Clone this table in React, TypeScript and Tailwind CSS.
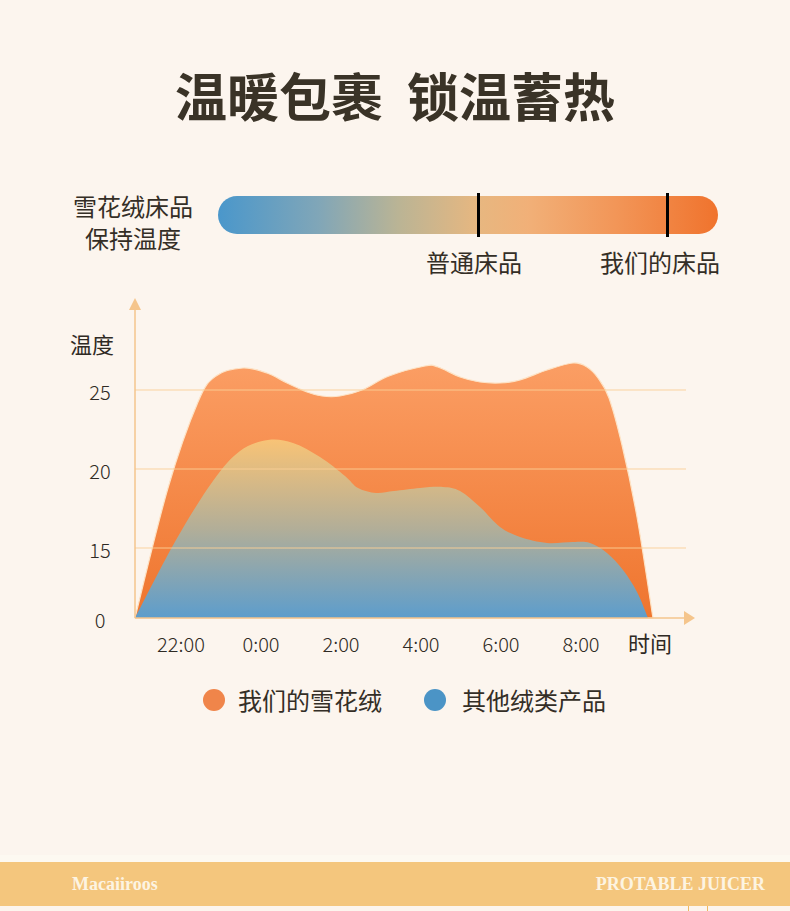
import React from "react";

type Pt = [number, number];

// chart drawn in page coordinates (svg sits at y=290)
const orangePts: Pt[] = [
  [135, 618], [168, 488], [198, 402], [216, 376], [243, 368], [267, 373], [287, 383],
  [307, 392], [322, 396], [340, 396], [362, 390], [389, 376], [425, 366], [438, 367],
  [460, 377], [480, 382], [500, 383], [520, 380], [547, 370], [573, 363], [587, 367],
  [598, 378], [609, 398], [622, 445], [637, 517], [653, 618],
];

const bluePts: Pt[] = [
  [135, 618], [176, 540], [213, 481], [240, 451], [268, 440], [293, 443], [320, 457],
  [345, 476], [358, 488], [376, 493], [394, 491], [420, 488], [443, 487], [460, 491],
  [480, 507], [500, 527], [520, 537], [547, 543], [573, 542], [590, 543], [607, 553],
  [623, 570], [637, 592], [648, 618],
];

function smooth(pts: Pt[]) {
  let d = `M${pts[0][0]},${pts[0][1]}`;
  for (let i = 0; i < pts.length - 1; i++) {
    const p0 = pts[i - 1] || pts[i];
    const p1 = pts[i];
    const p2 = pts[i + 1];
    const p3 = pts[i + 2] || p2;
    const c1x = p1[0] + (p2[0] - p0[0]) / 6;
    const c1y = p1[1] + (p2[1] - p0[1]) / 6;
    const c2x = p2[0] - (p3[0] - p1[0]) / 6;
    const c2y = p2[1] - (p3[1] - p1[1]) / 6;
    d += ` C${c1x.toFixed(1)},${c1y.toFixed(1)} ${c2x.toFixed(1)},${c2y.toFixed(1)} ${p2[0]},${p2[1]}`;
  }
  return d + " Z";
}

const yTicks = [
  { label: "25", y: 390 },
  { label: "20", y: 469 },
  { label: "15", y: 548 },
];

const xTicks = [
  { label: "22:00", x: 181 },
  { label: "0:00", x: 261 },
  { label: "2:00", x: 341 },
  { label: "4:00", x: 421 },
  { label: "6:00", x: 501 },
  { label: "8:00", x: 581 },
];

const cjk = { fontFamily: '"Noto Sans CJK SC", "Noto Sans", sans-serif' };

function TempChart() {
  return (
    <svg width="790" height="380" viewBox="0 290 790 380" className="block" style={cjk}>
      <defs>
        <linearGradient id="orangeFill" x1="0" y1="0" x2="0" y2="1">
          <stop offset="0" stopColor="#fb9e64" />
          <stop offset="1" stopColor="#ef752e" />
        </linearGradient>
        <linearGradient id="blueFill" x1="0" y1="0" x2="0" y2="1">
          <stop offset="0" stopColor="#f8c376" />
          <stop offset="0.5" stopColor="#b2ae98" />
          <stop offset="1" stopColor="#5d9dcc" />
        </linearGradient>
      </defs>

      <path d={smooth(orangePts)} fill="url(#orangeFill)" stroke="#fde3c6" strokeWidth="1.2" />
      <path d={smooth(bluePts)} fill="url(#blueFill)" />

      {yTicks.map((t) => (
        <line key={t.label} x1="135" x2="686" y1={t.y} y2={t.y} stroke="#fbcf96" strokeOpacity="0.9" strokeWidth="1" />
      ))}

      {/* axes */}
      <line x1="135" y1="618" x2="135" y2="306" stroke="#f5c58c" strokeWidth="1.5" />
      <polygon points="129,310 135,298 141,310" fill="#f5c58c" />
      <line x1="135" y1="618" x2="686" y2="618" stroke="#f5c58c" strokeWidth="1.5" />
      <polygon points="684,611 695,618 684,625" fill="#f5c58c" />

      <text x="92" y="343" fontSize="22" fill="#2f2a24" textAnchor="middle" dominantBaseline="central">温度</text>
      {yTicks.map((t) => (
        <text key={t.label} x="100" y={t.y + 1} fontSize="20" fontWeight="300" fill="#2f2a24" textAnchor="middle" dominantBaseline="central">
          {t.label}
        </text>
      ))}
      <text x="100" y="619" fontSize="20" fontWeight="300" fill="#2f2a24" textAnchor="middle" dominantBaseline="central">0</text>
      {xTicks.map((t) => (
        <text key={t.label} x={t.x} y="643" fontSize="20" fontWeight="300" fill="#2f2a24" textAnchor="middle" dominantBaseline="central">
          {t.label}
        </text>
      ))}
      <text x="650" y="642" fontSize="22" fill="#2f2a24" textAnchor="middle" dominantBaseline="central">时间</text>
    </svg>
  );
}

export default function App() {
  return (
    <div
      className="relative flex h-[911px] w-[790px] flex-col overflow-hidden bg-[#fcf5ee] text-[#342e26]"
      style={cjk}
    >
      {/* title */}
      <div className="mt-[64px] flex h-[62px] items-center justify-center gap-[24px] text-[52px] font-bold leading-[62px] text-[#3a3327]">
        <span>温暖包裹</span>
        <span>锁温蓄热</span>
      </div>

      {/* warmth bar */}
      <div className="mt-[64px] flex h-[100px] items-start">
        <div className="ml-[60px] w-[146px] text-center text-[24px] leading-[32px]">
          <div>雪花绒床品</div>
          <div>保持温度</div>
        </div>
        <div className="ml-[12px] flex w-[500px] flex-col">
          <div className="relative mt-[6px] h-[38px] rounded-full bg-[linear-gradient(90deg,#4a97cb_0%,#80a6b8_20%,#bab495_36%,#e7b780_52%,#f1b078_62%,#f29557_80%,#f0732d_100%)]">
            <div className="absolute left-[259px] top-[-3px] h-[44px] w-[3px] bg-black" />
            <div className="absolute left-[448px] top-[-3px] h-[44px] w-[3px] bg-black" />
          </div>
          <div className="mt-[12px] flex whitespace-nowrap text-[24px] leading-[32px]">
            <div className="ml-[208px] w-[120px] text-center">普通床品</div>
            <div className="ml-[78px] w-[140px] text-center">我们的床品</div>
          </div>
        </div>
      </div>

      {/* chart */}
      <TempChart />

      {/* legend */}
      <div className="mt-[14px] flex h-[32px] items-center text-[24px] leading-[32px]">
        <span className="ml-[203px] h-[22px] w-[22px] rounded-full bg-[#f0854a]" />
        <span className="ml-[13px]">我们的雪花绒</span>
        <span className="ml-[42px] h-[22px] w-[22px] rounded-full bg-[#4b94c6]" />
        <span className="ml-[16px]">其他绒类产品</span>
      </div>

      {/* footer */}
      <div className="mt-auto">
        <div className="h-[7px] bg-[#fdf9f1]" />
        <div
          className="flex h-[44px] items-center justify-between bg-[#f4c67d] pl-[72px] pr-[25px] text-[18px] font-bold text-[#fdf4e2]"
          style={{ fontFamily: '"Liberation Serif", serif' }}
        >
          <span>Macaiiroos</span>
          <span>PROTABLE JUICER</span>
        </div>
        <div className="flex h-[5px] bg-[#fcf5ee]">
          <div className="ml-[688px] h-full w-[20px] border-x border-[#f0b860]" />
        </div>
      </div>
    </div>
  );
}
